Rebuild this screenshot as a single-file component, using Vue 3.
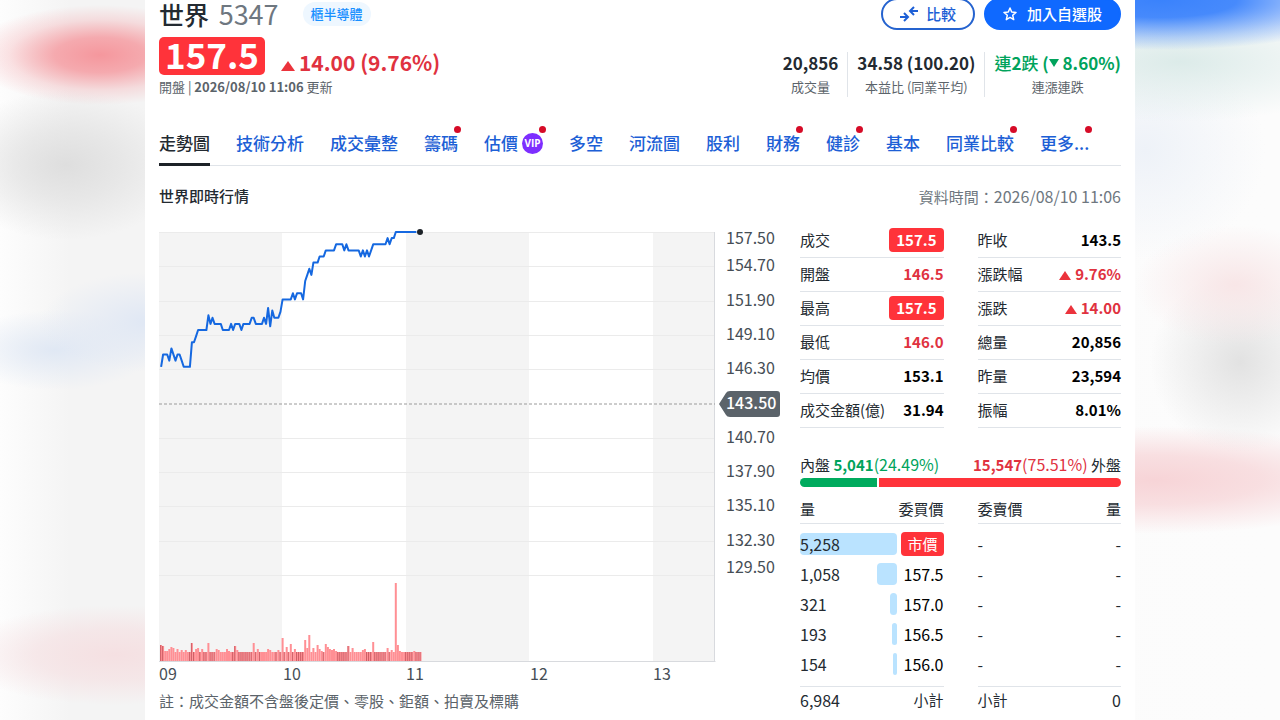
<script setup>
const tabs = [
  { name: '走勢圖', active: true },
  { name: '技術分析' },
  { name: '成交彙整' },
  { name: '籌碼', dot: true },
  { name: '估價', vip: true, dot: true },
  { name: '多空' },
  { name: '河流圖' },
  { name: '股利' },
  { name: '財務', dot: true },
  { name: '健診', dot: true },
  { name: '基本' },
  { name: '同業比較', dot: true },
  { name: '更多...', dot: true },
]

const summary = [
  { value: '20,856', label: '成交量' },
  { value: '34.58 (100.20)', label: '本益比 (同業平均)' },
]

const quotes = [
  [
    { label: '成交', value: '157.5', kind: 'limit' },
    { label: '開盤', value: '146.5', kind: 'up' },
    { label: '最高', value: '157.5', kind: 'limit' },
    { label: '最低', value: '146.0', kind: 'up' },
    { label: '均價', value: '153.1' },
    { label: '成交金額(億)', value: '31.94' },
  ],
  [
    { label: '昨收', value: '143.5' },
    { label: '漲跌幅', value: '9.76%', kind: 'up', arrow: true },
    { label: '漲跌', value: '14.00', kind: 'up', arrow: true },
    { label: '總量', value: '20,856' },
    { label: '昨量', value: '23,594' },
    { label: '振幅', value: '8.01%' },
  ],
]

const bids = [
  { qty: '5,258', price: '市價', share: 100, market: true },
  { qty: '1,058', price: '157.5', share: 21 },
  { qty: '321', price: '157.0', share: 7 },
  { qty: '193', price: '156.5', share: 5 },
  { qty: '154', price: '156.0', share: 4 },
]

/* Chart geometry: 270 trading minutes across 556 units */
const plot = { top: 7, width: 556 }
const toX = (minute) => Math.round((minute * plot.width * 10) / 270) / 10
const toY = (price) => Math.round((plot.top + ((157.5 - price) * 343) / 28) * 10) / 10

const prices = [
  [1, 146.5], [2, 147.5], [4, 147.5], [5, 147], [6, 148], [8, 147], [9, 147.5], [10, 147.5],
  [11, 147], [12, 146.5], [15, 146.5], [16, 148.5], [17, 148.5], [18, 149], [19, 149.5],
  [23, 149.5], [24, 150.7], [25, 150], [26, 150.5], [27, 150], [30, 150], [31, 149.5],
  [34, 149.5], [35, 150], [36, 149.5], [37, 150], [39, 150], [40, 149.5], [41, 150], [44, 150],
  [45, 150.5], [46, 150.5], [47, 150], [50, 150], [51, 150.5], [52, 150], [53, 151.3],
  [54, 149.8], [55, 151.1], [56, 150.5], [58, 150.5], [59, 151], [60, 152], [64, 152],
  [65, 152.5], [66, 152], [67, 152.5], [69, 152.5], [70, 152], [71, 153.5], [72, 154],
  [73, 154.5], [74, 154], [75, 155], [77, 155], [78, 155.5], [80, 155.5], [81, 156], [85, 156],
  [86, 156.5], [89, 156.5], [90, 156], [91, 156.5], [92, 156], [97, 156], [98, 155.5],
  [99, 156], [100, 155.5], [101, 156], [102, 155.5], [104, 156.5], [110, 156.5], [111, 157],
  [112, 156.5], [113, 157], [114, 157], [115, 157.5], [125, 157.5],
]
const pricePoints = prices.map(([m, p]) => `${toX(m)},${toY(p)}`).join(' ')

const peaks = {
  1: 16, 2: 15, 3: 10, 4: 10, 5: 12, 6: 14, 7: 13, 9: 12, 11: 11, 13: 11, 16: 18, 18: 12, 19: 13,
  21: 12, 24: 18, 28: 12, 29: 11, 33: 12, 34: 10, 37: 15, 38: 11, 46: 18, 48: 12, 53: 12, 54: 11,
  58: 11, 60: 23, 62: 14, 64: 17, 66: 12, 71: 21, 72: 13, 73: 26, 75: 13, 77: 16, 78: 12, 79: 10,
  81: 17, 82: 14, 83: 12, 84: 11, 85: 12, 86: 10, 92: 15, 94: 13, 99: 11, 100: 12, 104: 19,
  111: 13, 113: 11, 115: 78, 116: 16, 117: 10, 124: 10,
}
const darkPeaks = [1, 2, 16, 37, 92]
const volumes = Array.from({ length: 127 }, (_, i) => {
  const minute = i + 1
  const dark = peaks[minute] ? darkPeaks.includes(minute) : Math.floor(i / 7) % 3 !== 1
  return { x: toX(minute) - 1, h: peaks[minute] || 9, dark }
})

const gridPrices = [157.5, 154.7, 151.9, 149.1, 146.3, 140.7, 137.9, 135.1, 132.3, 129.5]
/* The outermost labels are kept inside the price area */
const axis = gridPrices.map((price) => {
  const shift = price === 157.5 ? 7 : price === 129.5 ? -7 : 0
  return { text: price.toFixed(2), lineY: Math.round(toY(price)), textY: Math.round(toY(price)) + shift + 5 }
})
const hours = ['09', '10', '11', '12', '13'].map((text, i) => ({ text, x: Math.round(toX(i * 60)) }))
</script>

<template>
  <div class="page">
    <main class="card">
      <header>
        <div class="title-row">
          <h1>世界 <span class="code">5347</span></h1>
          <a class="tag" href="#">櫃半導體</a>
          <div class="actions">
            <button class="btn" type="button">
              <svg width="18" height="16" viewBox="0 0 18 16" fill="none" stroke="currentColor" stroke-width="2">
                <path d="M0 11h8M4 7l4 4-4 4M18 5h-8M14 1l-4 4 4 4" />
              </svg>
              比較
            </button>
            <button class="btn primary" type="button">
              <svg width="14" height="14" viewBox="0 0 14 14" fill="none" stroke="currentColor" stroke-width="1.5" stroke-linejoin="round">
                <path d="M7 1l1.700 4 4.300.4-3.300 2.900 1 4.300L7 10.400l-3.700 2.200 1-4.300L1 5.400 5.300 5z" />
              </svg>
              加入自選股
            </button>
          </div>
        </div>
        <div class="price-row">
          <div>
            <div class="price-line">
              <strong class="price">157.5</strong>
              <span class="change"><i class="tri big"></i>14.00 (9.76%)</span>
            </div>
            <p class="updated">開盤 | <b>2026/08/10 11:06</b> 更新</p>
          </div>
          <div class="summary">
            <div v-for="s in summary" :key="s.label" class="sum-item">
              <strong>{{ s.value }}</strong>
              <span>{{ s.label }}</span>
            </div>
            <div class="sum-item green">
              <strong><span class="streak">連</span>2<span class="streak">跌</span> (<i class="tri down"></i> 8.60%)</strong>
              <span>連漲連跌</span>
            </div>
          </div>
        </div>
      </header>

      <nav class="tabs">
        <a v-for="t in tabs" :key="t.name" href="#" :class="{ active: t.active }">
          {{ t.name }}<span v-if="t.vip" class="vip">VIP</span>
          <i v-if="t.dot" class="dot"></i>
        </a>
      </nav>

      <div class="section-head">
        <h2>世界即時行情</h2>
        <p>資料時間：<span class="num">2026/08/10 11:06</span></p>
      </div>

      <div class="content">
        <section class="chart">
          <svg viewBox="0 0 621 460" role="img" aria-label="世界即時行情">
            <rect x="0" y="7" width="123" height="429" class="band" />
            <rect x="247" y="7" width="123" height="429" class="band" />
            <rect x="494" y="7" width="62" height="429" class="band" />
            <path v-for="a in axis" :key="a.text" :d="`M0 ${a.lineY}.5H556`" class="grid" />
            <path d="M0 436.500H556.500M555.500 7V436" class="frame" />
            <rect v-for="v in volumes" :key="v.x" :x="v.x" :y="436 - v.h" width="2" :height="v.h" class="vol" />
            <template v-for="v in volumes" :key="v.x">
              <rect v-if="v.dark" :x="v.x" :y="436 - v.h" width="1" :height="v.h" class="vol dark" />
            </template>
            <path d="M0 179H556" class="base" />
            <polyline :points="pricePoints" class="line" />
            <circle cx="261" cy="7" r="3" class="last" />
            <path d="M560 179l7-11q1-2 4-2h47q3 0 3 3v20q0 3-3 3h-47q-3 0-4-2z" class="flag" />
            <text x="567" y="184" class="flag-text">143.50</text>
            <text v-for="a in axis" :key="a.text" x="567" :y="a.textY">{{ a.text }}</text>
            <text v-for="h in hours" :key="h.text" :x="h.x" y="455">{{ h.text }}</text>
          </svg>
          <p class="note">註：成交金額不含盤後定價、零股、鉅額、拍賣及標購</p>
        </section>

        <aside>
          <div class="pair">
            <table v-for="(group, g) in quotes" :key="g" class="quotes">
              <tbody>
                <tr v-for="q in group" :key="q.label">
                  <th scope="row">{{ q.label }}</th>
                  <td :class="q.kind"><i v-if="q.arrow" class="tri"></i><span>{{ q.value }}</span></td>
                </tr>
              </tbody>
            </table>
          </div>

          <div class="ratio-text">
            <span>內盤 <span class="num in"><b>5,041</b>(24.49%)</span></span>
            <span><span class="num out"><b>15,547</b>(75.51%)</span> 外盤</span>
          </div>
          <div class="ratio"><i class="in-bar"></i><i class="out-bar"></i></div>

          <div class="pair">
            <table class="book">
              <thead>
                <tr><th scope="col">量</th><th scope="col">委買價</th></tr>
              </thead>
              <tbody>
                <tr v-for="b in bids" :key="b.qty">
                  <td>
                    <div class="qty"><i :style="{ width: b.share + '%' }"></i><span>{{ b.qty }}</span></div>
                  </td>
                  <td class="bid"><span :class="{ market: b.market }">{{ b.price }}</span></td>
                </tr>
              </tbody>
              <tfoot>
                <tr><td>6,984</td><td class="cjk">小計</td></tr>
              </tfoot>
            </table>
            <table class="book">
              <thead>
                <tr><th scope="col">委賣價</th><th scope="col">量</th></tr>
              </thead>
              <tbody>
                <tr v-for="n in 5" :key="n"><td>-</td><td>-</td></tr>
              </tbody>
              <tfoot>
                <tr><td class="cjk">小計</td><td>0</td></tr>
              </tfoot>
            </table>
          </div>
        </aside>
      </div>
    </main>
  </div>
</template>

<style>
body {
  overflow: hidden;
}
</style>

<style scoped>
.page {
  height: 100vh;
  overflow: hidden;
  box-sizing: border-box;
  padding: 0 145px;
  font-family: "Noto Sans CJK TC", "Noto Sans", sans-serif;
  font-size: 15px;
  line-height: 20px;
  color: #232a31;
  background:
    radial-gradient(130px 50px at 100px 55px, #f5979d, #f5979dcc 35%, #f5979d44 70%, #f5979d00),
    radial-gradient(120px 75px at 66px 165px, #dedede, #dedede99 45%, #dedede00),
    radial-gradient(110px 50px at 150px 322px, #dfe7f4, #dfe7f400),
    radial-gradient(100px 40px at 55px 350px, #e0e8f4, #e0e8f400),
    radial-gradient(160px 50px at 115px 655px, #f5e0e2, #f5e0e2aa 50%, #f5e0e200),
    radial-gradient(220px 50px at calc(100% - 120px) 0, #3a82fc, #3a82fcee 35%, #3a82fc55 75%, #3a82fc00),
    radial-gradient(190px 60px at calc(100% - 100px) 62px, #dcebe9, #dcebe900),
    radial-gradient(120px 110px at calc(100% - 135px) 150px, #eef2f8, #eef2f800),
    radial-gradient(100px 60px at calc(100% - 45px) 285px, #f8e6e7, #f8e6e700),
    radial-gradient(90px 90px at calc(100% - 40px) 362px, #e2e2e2, #e2e2e200),
    radial-gradient(240px 54px at calc(100% - 125px) 480px, #f7d4d7, #f7d4d7bb 45%, #f7d4d700),
    linear-gradient(90deg, #fdfdfd, #f4f4f4 70px, #f4f4f4 50%, #fbfbfb 50%, #fcfcfc);
}
.card {
  min-height: 100%;
  box-sizing: border-box;
  padding: 0 14px;
  background: #fff;
}
h1, h2, p { margin: 0; }
a { text-decoration: none; }
svg { flex: none; }

.title-row {
  display: flex;
  align-items: center;
  height: 28px;
}
h1 {
  font-size: 25px;
  line-height: 28px;
  font-weight: 500;
}
.code {
  margin-left: 4px;
  font-size: 27px;
  font-weight: 400;
  color: #6e7780;
}
.tag {
  margin-left: 24px;
  padding: 0 8px;
  border-radius: 12px;
  background: #eef7ff;
  color: #188fff;
  font-size: 13px;
  line-height: 24px;
  font-weight: 500;
}
.actions {
  display: flex;
  align-items: center;
  gap: 9px;
  margin-left: auto;
}
.btn {
  display: flex;
  align-items: center;
  gap: 8px;
  height: 32px;
  padding: 0 17px;
  border: 2px solid #2563cf;
  border-radius: 16px;
  background: #fff;
  color: #1d5fd6;
  font: 500 15px/20px "Noto Sans CJK TC", sans-serif;
}
.btn.primary {
  gap: 10px;
  border-color: #0f69ff;
  background: #0f69ff;
  color: #fff;
}
.price-row {
  display: flex;
  justify-content: space-between;
  margin-top: 9px;
}
.price-line {
  display: flex;
  align-items: flex-end;
  gap: 16px;
}
.price {
  padding: 0 6px 4px;
  border-radius: 5px;
  background: #ff333a;
  color: #fff;
  font-size: 35px;
  line-height: 34px;
}
.change {
  color: #e0323f;
  font-size: 21px;
  line-height: 26px;
  font-weight: 700;
}
.updated {
  margin-top: 2px;
  font-size: 13px;
  color: #5b636a;
}
.tri {
  display: inline-block;
  margin-right: 4px;
  border: 6px solid transparent;
  border-top: 0;
  border-bottom: 9px solid #eb333c;
}
.tri.big { border-width: 0 7px 10px; }
.tri.down {
  margin: 0;
  border: 5px solid transparent;
  border-bottom: 0;
  border-top: 8px solid #00a35c;
  vertical-align: 3px;
}
.summary {
  display: flex;
  align-self: flex-end;
}
.sum-item {
  display: flex;
  flex-direction: column;
  align-items: center;
  gap: 3px;
  padding: 0 9px;
  border-left: 1px solid #e0e4e9;
}
.sum-item:first-child { border-left: 0; }
.sum-item:last-child { padding-right: 0; }
.sum-item strong { font-size: 17px; line-height: 22px; }
.sum-item > span { font-size: 13px; line-height: 20px; color: #5b636a; }
.green strong { color: #00a35c; }
.streak { font-weight: 500; }

.tabs {
  display: flex;
  gap: 26px;
  margin-top: 26px;
  border-bottom: 1px solid #e0e4e9;
}
.tabs a {
  position: relative;
  display: flex;
  align-items: center;
  gap: 4px;
  height: 43px;
  border-bottom: 3px solid transparent;
  box-sizing: border-box;
  margin-bottom: -1px;
  color: #1d5fd6;
  font-size: 17px;
  font-weight: 500;
  white-space: nowrap;
}
.tabs a.active { color: #232a31; border-color: #1d2228; }
.dot {
  position: absolute;
  top: 3px;
  right: -3px;
  width: 7px;
  height: 7px;
  border-radius: 50%;
  background: #d60b27;
}
.vip {
  width: 21px;
  border-radius: 11px;
  background: #7d2eff;
  color: #fff;
  font: 700 10px/21px "Open Sans", sans-serif;
  text-align: center;
}
.section-head {
  display: flex;
  justify-content: space-between;
  margin-top: 20px;
}
h2 { font-size: 15px; line-height: 20px; font-weight: 500; }
.section-head p { color: #6e7780; }
.num { font-size: 16px; }

.content {
  display: grid;
  grid-template-columns: minmax(0, 1fr) 321px;
  gap: 20px;
  margin-top: 16px;
}
.chart { padding-top: 2px; }
.chart svg { display: block; width: 100%; }
.chart text { font-size: 16px; fill: #464e56; }
.chart .flag-text { fill: #fff; font-weight: 500; }
.band { fill: #f4f4f4; }
.grid { fill: none; stroke: #ebebeb; }
.frame { fill: none; stroke: #d8dade; }
.base { stroke: #9a9a9a; stroke-dasharray: 3 2; }
.line { fill: none; stroke: #1568e0; stroke-width: 2; stroke-linejoin: round; }
.last { fill: #1d2228; }
.flag { fill: #5b636a; }
.vol { fill: #ff8f94; }
.vol.dark { fill: #cf5f66; }
.note { margin-top: 6px; color: #5b636a; }

.pair {
  display: grid;
  grid-template-columns: 1fr 1fr;
  gap: 34px;
}
table {
  width: 100%;
  border-collapse: collapse;
}
th, td {
  padding: 0;
  text-align: left;
  font-weight: 400;
  white-space: nowrap;
}
tr > :last-child { text-align: right; }
.quotes tr { height: 34px; border-bottom: 1px solid #e0e4e9; }
.quotes td { font-size: 15px; font-weight: 700; color: #000; }
.quotes td.up { color: #e0323f; }
.quotes td.limit { color: #fff; }
.limit span {
  display: inline-block;
  padding: 0 7px;
  border-radius: 4px;
  background: #ff333a;
  line-height: 24px;
}
.ratio-text {
  display: flex;
  justify-content: space-between;
  margin-top: 26px;
}
.ratio-text b { font-size: 15px; }
.in { color: #00a35c; }
.out { color: #e0323f; }
.ratio {
  display: flex;
  gap: 2px;
  height: 9px;
  margin-top: 3px;
  border-radius: 5px;
  overflow: hidden;
}
.in-bar { flex: 24; background: #00ab5e; }
.out-bar { flex: 76; background: #ff333a; }
.book { margin-top: 11px; font-size: 16px; }
.book th { height: 22px; padding-bottom: 3px; font-size: 15px; border-bottom: 1px solid #e0e4e9; }
.book tbody td { height: 30px; }
.book tbody tr:first-child td { height: 36px; padding-top: 6px; box-sizing: border-box; }
.book tbody tr:last-child td { padding-bottom: 7px; }
.book tfoot td { height: 26px; border-top: 1px solid #e0e4e9; }
.book .cjk { font-size: 15px; }
.qty {
  position: relative;
  width: 97px;
  line-height: 22px;
}
.qty i {
  position: absolute;
  top: 0;
  right: 0;
  height: 22px;
  border-radius: 4px;
  background: #bae3ff;
}
.qty span { position: relative; }
.bid { color: #000; }
.market {
  display: inline-block;
  padding: 0 6px;
  border-radius: 4px;
  background: #ff333a;
  color: #fff;
  font-size: 15px;
  line-height: 24px;
}
</style>
